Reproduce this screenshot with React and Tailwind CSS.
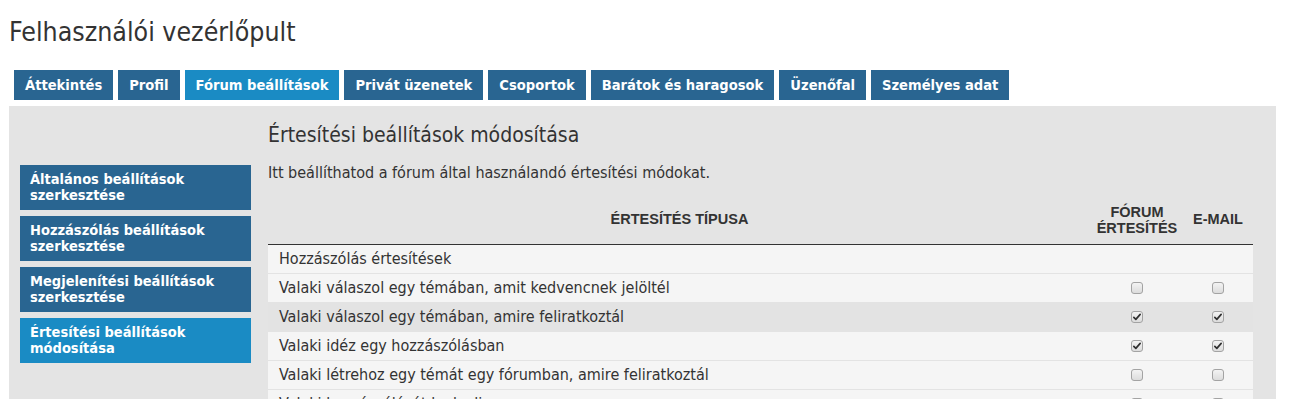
import React from 'react';

const FONT = "font-['DejaVu_Sans_Condensed','DejaVu_Sans',sans-serif]";

const tabs = [
    { label: 'Áttekintés' },
    { label: 'Profil' },
    { label: 'Fórum beállítások', active: true },
    { label: 'Privát üzenetek' },
    { label: 'Csoportok' },
    { label: 'Barátok és haragosok' },
    { label: 'Üzenőfal' },
    { label: 'Személyes adat' },
];

const sideLinks = [
    { label: ['Általános beállítások', 'szerkesztése'] },
    { label: ['Hozzászólás beállítások', 'szerkesztése'] },
    { label: ['Megjelenítési beállítások', 'szerkesztése'] },
    { label: ['Értesítési beállítások', 'módosítása'], active: true },
];

const rows = [
    { text: 'Hozzászólás értesítések', section: true },
    { text: 'Valaki válaszol egy témában, amit kedvencnek jelöltél', forum: false, email: false },
    { text: 'Valaki válaszol egy témában, amire feliratkoztál', forum: true, email: true, hover: true },
    { text: 'Valaki idéz egy hozzászólásban', forum: true, email: true },
    { text: 'Valaki létrehoz egy témát egy fórumban, amire feliratkoztál', forum: false, email: false },
    { text: 'Valaki hozzászólását kedveli', forum: false, email: false },
];

function Check({ checked }) {
    return (
        <span className="inline-flex items-center justify-center w-[12px] h-[12px] rounded-[3px] border border-[#a3a3a3] bg-gradient-to-b from-[#f3f3f3] to-[#dcdcdc] align-middle">
            {checked && (
                <svg viewBox="0 0 12 12" className="w-[10px] h-[10px]">
                    <path d="M2.2 6.4 L4.6 8.8 L9.8 2.8" fill="none" stroke="#2f2f2f" strokeWidth="2" strokeLinecap="round" strokeLinejoin="round" />
                </svg>
            )}
        </span>
    );
}

export default function App() {
    return (
        <div className={`${FONT} bg-white text-[#333] pl-[9px] pr-[17px] h-[399px] overflow-hidden`}>
            <h1 className="pt-[17px] text-[26.5px] leading-[30px] font-normal text-[#333]">Felhasználói vezérlőpult</h1>

            {/* Top tabs */}
            <div className="flex gap-[5px] mt-[23px] pl-[5px]">
                {tabs.map((t) => (
                    <div
                        key={t.label}
                        className={`h-[30px] px-[11px] flex items-center text-[14.6px] font-bold text-white ${t.active ? 'bg-[#1a8bc4]' : 'bg-[#296591]'}`}
                    >
                        {t.label}
                    </div>
                ))}
            </div>

            {/* Panel */}
            <div className="mt-[6px] bg-[#e4e4e4] flex pl-[11px] pr-[23px] pb-6">
                <div className="w-[231px] shrink-0 pt-[59px] flex flex-col gap-[6px]">
                    {sideLinks.map((s) => (
                        <div
                            key={s.label[0]}
                            className={`h-[45px] pl-[10px] pt-[6px] text-[14.5px] leading-[16px] font-bold text-white ${s.active ? 'bg-[#1a8bc4]' : 'bg-[#296591]'}`}
                        >
                            {s.label[0]}
                            <br />
                            {s.label[1]}
                        </div>
                    ))}
                </div>

                <div className="flex-1 ml-[17px] pt-[17px]">
                    <h2 className="text-[21px] leading-[24px] font-normal text-[#333]">Értesítési beállítások módosítása</h2>
                    <p className="mt-[16px] text-[16px] leading-[19px]">Itt beállíthatod a fórum által használandó értesítési módokat.</p>

                    <table className="mt-[14px] w-full border-collapse">
                        <thead>
                            <tr className="border-b border-[#333] font-['Liberation_Sans',Arial,sans-serif] text-[14.5px] font-bold uppercase text-[#333]">
                                <th className="h-[48px] font-bold">Értesítés típusa</th>
                                <th className="w-[92px] leading-[16px] font-bold">Fórum<br />értesítés</th>
                                <th className="w-[70px] font-bold">E-mail</th>
                            </tr>
                        </thead>
                        <tbody>
                            {rows.map((r) => (
                                <tr key={r.text} className={`h-[29px] border-b border-[#e3e3e3] ${r.hover ? 'bg-[#e3e3e3]' : 'bg-[#f5f5f5]'}`}>
                                    <td className="pl-[11px] text-[16px] leading-[18px]">{r.text}</td>
                                    <td className="text-center">{!r.section && <Check checked={r.forum} />}</td>
                                    <td className="text-center">{!r.section && <Check checked={r.email} />}</td>
                                </tr>
                            ))}
                        </tbody>
                    </table>
                </div>
            </div>
        </div>
    );
}
